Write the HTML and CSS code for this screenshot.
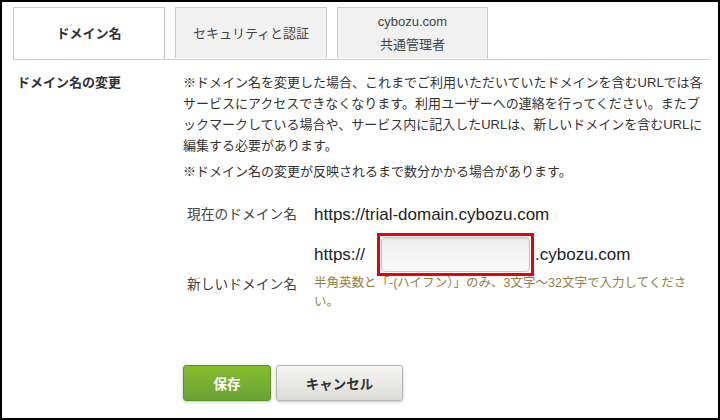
FILE: index.html
```html
<!DOCTYPE html>
<html lang="ja">
<head>
<meta charset="utf-8">
<title>ドメイン名</title>
<link rel="stylesheet" href="styles.css">
</head>
<body>
<div class="frame">
  <div class="tabs">
    <div class="tab active">ドメイン名</div>
    <div class="tab">セキュリティと認証</div>
    <div class="tab two">cybozu.com<br>共通管理者</div>
  </div>
  <div class="section">
    <div class="sec-label">ドメイン名の変更</div>
    <div class="sec-body">
      <p class="note">※ドメイン名を変更した場合、これまでご利用いただいていたドメインを含むURLでは各<br>サービスにアクセスできなくなります。利用ユーザーへの連絡を行ってください。またブ<br>ックマークしている場合や、サービス内に記入したURLは、新しいドメインを含むURLに<br>編集する必要があります。</p>
      <p class="note note2">※ドメイン名の変更が反映されるまで数分かかる場合があります。</p>
      <div class="form">
        <div class="row row1">
          <div class="flabel">現在のドメイン名</div>
          <div class="fval">https://trial-domain.cybozu.com</div>
        </div>
        <div class="row row2">
          <div class="flabel"></div>
          <div class="fval inputline">
            <span>https://</span>
            <span class="mark"><span class="input"></span></span>
            <span>.cybozu.com</span>
          </div>
        </div>
        <div class="row row3">
          <div class="flabel">新しいドメイン名</div>
          <div class="hint">半角英数と「-(ハイフン）」のみ、3文字～32文字で入力してくださ<br>い。</div>
        </div>
      </div>
      <div class="buttons">
        <button class="btn save">保存</button>
        <button class="btn cancel">キャンセル</button>
      </div>
    </div>
  </div>
</div>
</body>
</html>
```
FILE: styles.css
```css
html, body {
  margin: 0;
  padding: 0;
  background: #fff;
}
body {
  font-family: "Liberation Sans", "Noto Sans CJK JP", sans-serif;
  color: #333;
  font-size: 13px;
}
.frame {
  width: 720px;
  height: 420px;
  box-sizing: border-box;
  border: 2px solid #000;
  background: #fff;
  overflow: hidden;
}
.tabs {
  display: flex;
  gap: 10px;
  margin: 5px 8px 0 11px;
  border-bottom: 1px solid #ccc;
  height: 52px;
}
.tab {
  width: 152px;
  height: 51px;
  box-sizing: border-box;
  border: 1px solid #ccc;
  border-bottom: none;
  background: #f1f1f1;
  display: flex;
  align-items: center;
  justify-content: center;
  text-align: center;
  color: #444;
  font-size: 13px;
  line-height: 23px;
}
.tab.active {
  background: #fff;
  height: 52px;
  font-weight: bold;
  color: #333;
}
.tab.two {
  width: 151px;
}
.section {
  display: flex;
  padding-top: 12px;
}
.sec-label {
  width: 166px;
  padding-left: 15px;
  font-weight: bold;
  line-height: 21px;
  flex: none;
}
.sec-body {
  flex: 1;
}
.note {
  margin: 0;
  line-height: 21px;
  white-space: nowrap;
}
.note2 {
  margin-top: 5px;
}
.form {
  padding-left: 4px;
  margin-top: 22px;
}
.row {
  display: flex;
  align-items: flex-start;
}
.flabel {
  width: 127px;
  flex: none;
  color: #444;
  font-size: 13.75px;
  line-height: 22px;
}
.fval {
  font-size: 17px;
  line-height: 22px;
  color: #222;
}
.row2 {
  margin-top: 11px;
}
.inputline {
  display: flex;
  align-items: center;
  height: 35px;
}
.mark {
  display: block;
  margin-left: 16px;
  margin-right: 5px;
  outline: 3px solid #e8000b;
  outline-offset: 1px;
}
.input {
  display: block;
  width: 149px;
  height: 35px;
  box-sizing: border-box;
  border: 1px solid #c9c9c9;
  border-radius: 4px;
  background: linear-gradient(#efefef, #f9f9f9);
  box-shadow: inset 0 1px 2px rgba(0,0,0,0.1);
}
.row3 {
  margin-top: 2px;
}
.row3 .flabel {
  line-height: 19px;
  padding-top: 1px;
}
.hint {
  color: #95803c;
  font-size: 12.5px;
  line-height: 19px;
  white-space: nowrap;
}
.buttons {
  display: flex;
  gap: 5px;
  margin-top: 53px;
}
.btn {
  height: 36px;
  box-sizing: border-box;
  border-radius: 3px;
  font-family: "Liberation Sans", "Noto Sans CJK JP", sans-serif;
  font-size: 13.5px;
  font-weight: bold;
  padding: 0;
  box-shadow: 0 1px 3px rgba(0,0,0,0.25);
}
.save {
  width: 88px;
  color: #fff;
  border: 1px solid #5b9521;
  background: linear-gradient(#86bd2c, #6aa238);
}
.cancel {
  width: 127px;
  color: #333;
  border: 1px solid #b5b5b5;
  background: linear-gradient(#f5f5f3, #dddcd8);
}
```
